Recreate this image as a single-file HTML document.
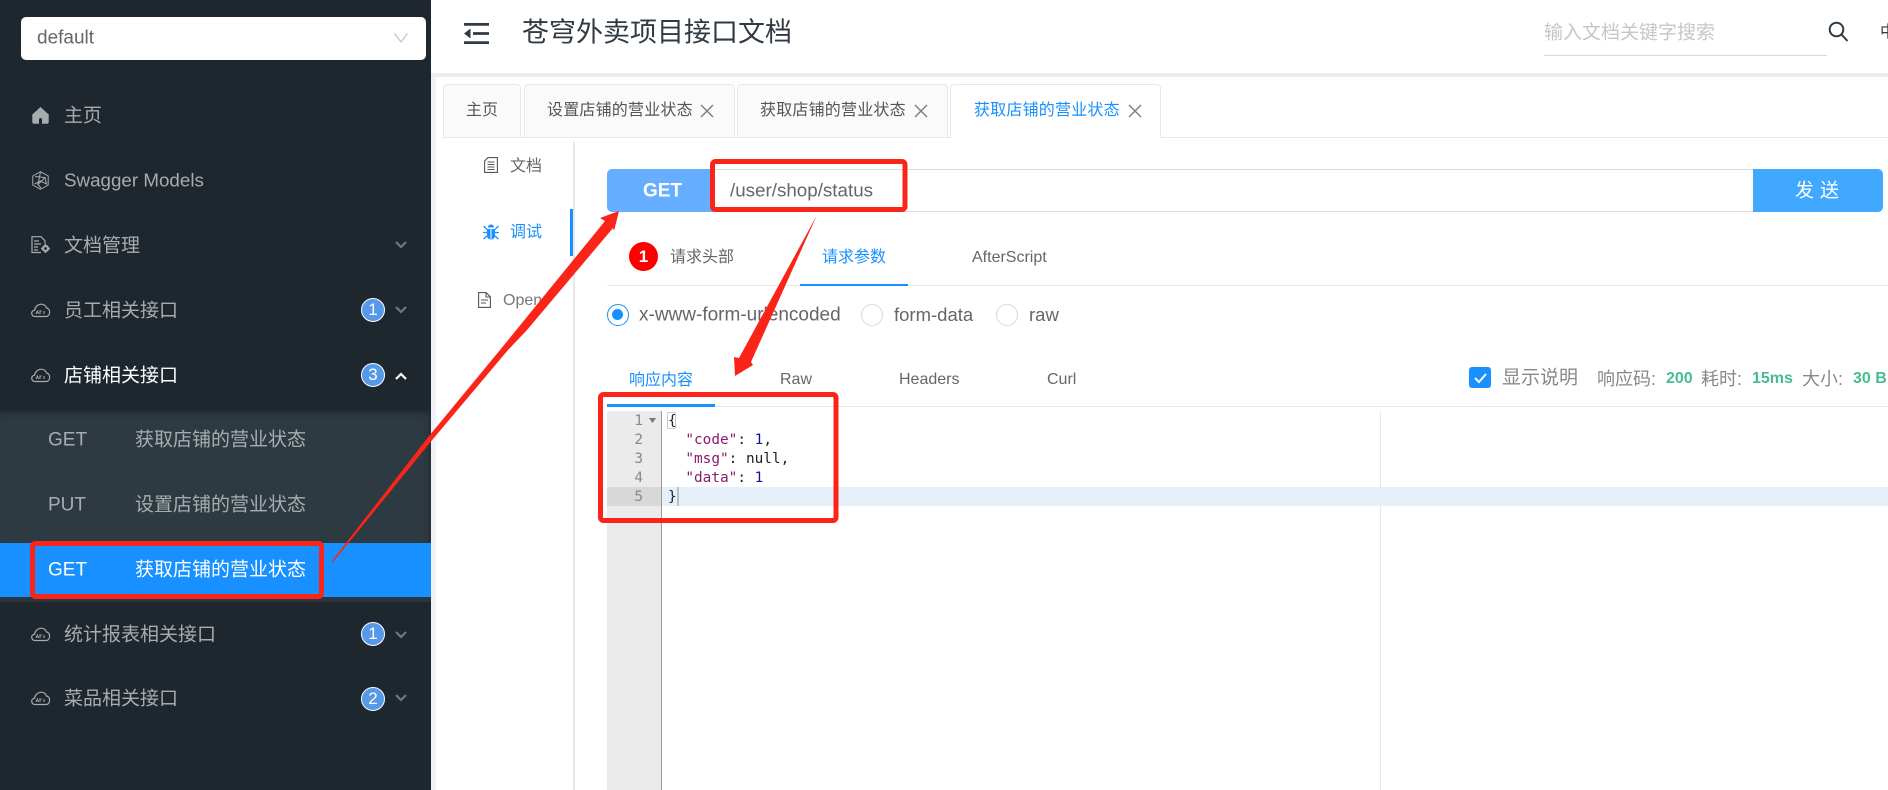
<!DOCTYPE html>
<html lang="zh-CN"><head><meta charset="utf-8"><title>苍穹外卖项目接口文档</title>
<style>
html,body{margin:0;padding:0;width:1888px;height:790px;overflow:hidden;background:#fff}
body{position:relative;font-family:"Liberation Sans","Noto Sans CJK SC",sans-serif;color:#666}
.a{position:absolute}
.t{position:absolute;white-space:nowrap;line-height:1;transform:translateY(calc(-50% + 1px))}
.s{font-size:19px;color:#a8acaf}
.tab{position:absolute;top:84px;height:52px;background:#fafafa;border:1px solid #e8e8e8;border-bottom:0;border-radius:4px 4px 0 0;box-sizing:content-box}
.b{position:absolute;width:22px;height:22px;border:1.500px solid #fff;border-radius:50%;background:#5599e8;color:#fff;font-size:17px;line-height:22px;text-align:center}
.m{font-family:"DejaVu Sans Mono","Liberation Mono",monospace;font-size:14.400px;position:absolute;white-space:pre;line-height:19px;color:#222}
.str{color:#8a1a6e}.num{color:#12129a}
.ln{position:absolute;left:607px;width:36px;text-align:right;font-family:"DejaVu Sans Mono","Liberation Mono",monospace;font-size:14.400px;line-height:19px;color:#888}
.r{position:absolute;width:20px;height:20px;border:1px solid #d9d9d9;border-radius:50%;background:#fff}
svg{position:absolute;overflow:visible}
</style></head><body>

<!-- sidebar -->
<div class="a" style="left:0;top:0;width:431px;height:790px;background:#1f272e"></div>
<div class="a" style="left:431px;top:73px;width:5px;height:717px;background:#f0f3f6"></div>
<div class="a" style="left:21px;top:17px;width:405px;height:43px;background:#fff;border-radius:5px"></div>
<div class="t" style="left:37px;top:37px;font-size:19px;color:#666">default</div>
<svg style="left:394px;top:33px" width="14" height="10"><path d="M.5 .5L7 9 13.500 .5" fill="none" stroke="#c4c4c4" stroke-width="1.200"/></svg>

<div class="a" style="left:0;top:410px;width:431px;height:133px;background:#2e3a42;box-shadow:inset 0 8px 8px -6px #1f272e,inset -8px 0 8px -8px #1f272e"></div>
<div class="a" style="left:0;top:597px;width:431px;height:5px;background:#2a353c"></div>
<div class="a" style="left:0;top:543px;width:431px;height:54px;background:#1890ff"></div>

<svg style="left:32px;top:107px" width="17" height="17" viewBox="0 0 17 17"><path fill="#a8acaf" d="M8.500 0L.3 7.500V15c0 1 .7 1.700 1.700 1.700h13c1 0 1.700-.7 1.700-1.700V7.500zM7 16.700v-4.200c0-.8.7-1.500 1.500-1.500s1.500 .7 1.500 1.500v4.200z"/></svg>
<svg style="left:32px;top:171px" width="17" height="19" viewBox="0 0 17 19" fill="none" stroke="#a8acaf" stroke-width="1"><path d="M8.500 .7L16.200 5v9l-7.700 4.300L.8 14V5z"/><path d="M3 5.500l10 1-7 7 3 3.500M8.500 1l-2.500 12M13 6.500l1.500 6.500-6-3-6 3"/></svg>
<svg style="left:31px;top:236px" width="20" height="18" viewBox="0 0 20 18" fill="none" stroke="#a8acaf" stroke-width="1.200"><path d="M10 16.500H1V.7h9l4 4v3M3 5h5M3 8h7M3 11h4M3 14h4"/><circle cx="14.500" cy="12.500" r="2.500" stroke-width="2.200"/><path d="M14.500 8v1.500M14.500 15.500V17M10 12.500h1.500M17.500 12.500H19" stroke-width="1.500"/></svg>

<div class="t s" style="left:64px;top:115px">主页</div>
<div class="t s" style="left:64px;top:180px;font-size:18.800px">Swagger Models</div>
<div class="t s" style="left:64px;top:245px">文档管理</div>
<div class="t s" style="left:64px;top:310px">员工相关接口</div>
<div class="t s" style="left:64px;top:375px;color:#fff">店铺相关接口</div>
<div class="t s" style="left:48px;top:439px">GET</div>
<div class="t s" style="left:135px;top:439px">获取店铺的营业状态</div>
<div class="t s" style="left:48px;top:504px">PUT</div>
<div class="t s" style="left:135px;top:504px">设置店铺的营业状态</div>
<div class="t s" style="left:48px;top:569px;color:#fff">GET</div>
<div class="t s" style="left:135px;top:569px;color:#fff">获取店铺的营业状态</div>
<div class="t s" style="left:64px;top:634px">统计报表相关接口</div>
<div class="t s" style="left:64px;top:698px">菜品相关接口</div>

<svg style="left:0;top:0" width="431" height="790">
<defs><g id="c" fill="none" stroke="#a8acaf" stroke-width="1.200"><path d="M5 13.500H4C2 13.500 .7 12 .7 10.300 .7 8.500 2 7.500 3.500 7.300 4 4 7 1 10.500 1.200 13 1.200 15 3 15.500 5 17.500 5.200 18.600 7 18.600 9.300 18.600 12 17 13.500 15 13.500z"/><path d="M5 11l1.500-3 1 3M9 11V8h1.500M13 8v3" stroke-width="1"/></g></defs>
<use href="#c" x="31" y="303"/><use href="#c" x="31" y="368"/><use href="#c" x="31" y="627"/><use href="#c" x="31" y="691"/>
<g fill="none" stroke="#70777c" stroke-width="2.200"><path d="M396 242l5 5 5-5M396 307l5 5 5-5M396 632l5 5 5-5M396 695l5 5 5-5"/></g>
<path d="M396 379l5-5 5 5" fill="none" stroke="#fff" stroke-width="2.200"/>
</svg>
<div class="b" style="left:361px;top:298px">1</div>
<div class="b" style="left:361px;top:363px">3</div>
<div class="b" style="left:361px;top:622px">1</div>
<div class="b" style="left:361px;top:687px">2</div>

<!-- header -->
<div class="a" style="left:431px;top:73px;width:1457px;height:4px;background:#e9edf0"></div>
<svg style="left:464px;top:23px" width="25" height="21" viewBox="0 0 25 21"><path fill="#303a44" d="M0 0h25v2.800H0zM0 18.200h25V21H0zM9 9.100h16v2.800H9zM6.500 5.500v10L0 10.500z"/></svg>
<div class="t" style="left:522px;top:32px;font-size:27px;color:#303a44">苍穹外卖项目接口文档</div>
<div class="t" style="left:1544px;top:32px;font-size:19px;color:#c6c6c6">输入文档关键字搜索</div>
<div class="a" style="left:1544px;top:55px;width:283px;height:1px;background:#d9d9d9"></div>
<svg style="left:1828px;top:21px" width="21" height="21" viewBox="0 0 21 21" fill="none" stroke="#2d3a46" stroke-width="2"><circle cx="8.500" cy="8.500" r="6.800"/><path d="M13.500 13.500l6 6.500"/></svg>
<div class="t" style="left:1880px;top:32px;font-size:16px;color:#303a44">中</div>

<!-- tabs -->
<div class="a" style="left:443px;top:137px;width:1445px;height:1px;background:#e8e8e8"></div>
<div class="tab" style="left:443px;width:76px"></div>
<div class="tab" style="left:524px;width:209px"></div>
<div class="tab" style="left:737px;width:209px"></div>
<div class="tab" style="left:950px;width:209px;height:53px;background:#fff"></div>
<div class="t" style="left:466px;top:110px;font-size:16px;color:#555">主页</div>
<div class="t" style="left:547px;top:110px;font-size:16px;letter-spacing:.2px;color:#555">设置店铺的营业状态</div>
<div class="t" style="left:760px;top:110px;font-size:16px;letter-spacing:.2px;color:#555">获取店铺的营业状态</div>
<div class="t" style="left:974px;top:110px;font-size:16px;letter-spacing:.2px;color:#1890ff">获取店铺的营业状态</div>
<svg style="left:0;top:0" width="1888" height="200"><g stroke="#808080" stroke-width="1.500" fill="none"><path d="M701 105l12 12M713 105l-12 12M915 105l12 12M927 105l-12 12M1129 105l12 12M1141 105l-12 12"/></g></svg>

<!-- vertical nav -->
<div class="a" style="left:573px;top:142px;width:2px;height:648px;background:#e8e8e8"></div>
<div class="a" style="left:570px;top:209px;width:3px;height:47px;background:#1890ff"></div>
<svg style="left:484px;top:157px" width="14" height="16" viewBox="0 0 14 16" fill="none" stroke="#555" stroke-width="1.100"><path d="M4 .6h9.400v14.800H.6V4zM3.500 5h7M3.500 7.500h7M3.500 10h7M3.500 12.500h7"/></svg>
<svg style="left:483px;top:224px" width="16" height="16" viewBox="0 0 16 16"><path fill="#1890ff" d="M5 3.500C5 1.500 6.500.5 8 .5s3 1 3 3zM4 5h8v7c0 2-2 3.500-4 3.500S4 14 4 12z"/><path stroke="#1890ff" stroke-width="1.300" d="M.5 2l3.500 3.500M15.500 2L12 5.500M0 8.500h4M16 8.500h-4M.5 15L4 12M15.500 15L12 12"/><path stroke="#fff" d="M8 5v10"/></svg>
<svg style="left:478px;top:292px" width="13" height="16" viewBox="0 0 13 16" fill="none" stroke="#555" stroke-width="1.100"><path d="M.6.6h7.500l4.300 4.300v10.500H.6zM8 .6v4.400h4.400M3 8h7M3 11h5"/></svg>
<div class="t" style="left:510px;top:166px;font-size:16px;color:#666">文档</div>
<div class="t" style="left:510px;top:232px;font-size:16px;color:#1890ff">调试</div>
<div class="t" style="left:503px;top:300px;font-size:16px;color:#777">Open</div>

<!-- url row -->
<div class="a" style="left:715px;top:169px;width:1040px;height:41px;border:1px solid #d9d9d9;border-width:1px 0"></div>
<div class="a" style="left:607px;top:169px;width:108px;height:43px;background:#66aeff;border-radius:5px 0 0 5px"></div>
<div class="t" style="left:643px;top:190px;font-size:19px;font-weight:bold;color:#fff">GET</div>
<div class="t" style="left:730px;top:190px;font-size:18.800px;color:#666">/user/shop/status</div>
<div class="a" style="left:1753px;top:169px;width:130px;height:43px;background:#40a9ff;border-radius:0 5px 5px 0"></div>
<div class="t" style="left:1795px;top:190px;font-size:19px;letter-spacing:6px;color:#fff">发送</div>

<!-- request tabs -->
<div class="a" style="left:607px;top:285px;width:1281px;height:1px;background:#e8e8e8"></div>
<div class="a" style="left:800px;top:284px;width:108px;height:2px;background:#1890ff"></div>
<div class="a" style="left:629px;top:242px;width:29px;height:29px;border-radius:50%;background:#f00;color:#fff;font-size:17px;font-weight:bold;line-height:29px;text-align:center">1</div>
<div class="t" style="left:670px;top:257px;font-size:16px;color:#666">请求头部</div>
<div class="t" style="left:822px;top:257px;font-size:16px;color:#1890ff">请求参数</div>
<div class="t" style="left:972px;top:257px;font-size:16px;color:#666">AfterScript</div>

<!-- radios -->
<div class="r" style="left:607px;top:304px;border-color:#1890ff"></div>
<div class="a" style="left:612px;top:309px;width:11px;height:11px;border-radius:50%;background:#1890ff"></div>
<div class="t" style="left:639px;top:314px;font-size:19px;color:#666">x-www-form-urlencoded</div>
<div class="r" style="left:861px;top:304px"></div>
<div class="t" style="left:894px;top:314px;font-size:18.500px;color:#666">form-data</div>
<div class="r" style="left:996px;top:304px"></div>
<div class="t" style="left:1029px;top:314px;font-size:18.500px;color:#666">raw</div>

<!-- response tabs -->
<div class="a" style="left:607px;top:406px;width:1281px;height:1px;background:#e8e8e8"></div>
<div class="a" style="left:607px;top:404px;width:108px;height:3px;background:#1890ff"></div>
<div class="t" style="left:629px;top:380px;font-size:16px;color:#1890ff">响应内容</div>
<div class="t" style="left:780px;top:379px;font-size:16px;color:#666">Raw</div>
<div class="t" style="left:899px;top:379px;font-size:16px;color:#666">Headers</div>
<div class="t" style="left:1047px;top:379px;font-size:16px;color:#666">Curl</div>

<div class="a" style="left:1469px;top:367px;width:22px;height:21px;background:#1890ff;border-radius:3px"></div>
<svg style="left:1469px;top:367px" width="22" height="21"><path d="M6 11l4 4 7-8" fill="none" stroke="#fff" stroke-width="2"/></svg>
<div class="t" style="left:1502px;top:377px;font-size:19px;color:#888">显示说明</div>
<div class="t" style="left:1597px;top:378px;font-size:18px;color:#888">响应码:</div>
<div class="t" style="left:1666px;top:378px;font-size:16px;font-weight:bold;color:#47bd8f">200</div>
<div class="t" style="left:1701px;top:378px;font-size:18px;color:#888">耗时:</div>
<div class="t" style="left:1752px;top:378px;font-size:16px;font-weight:bold;color:#47bd8f">15ms</div>
<div class="t" style="left:1802px;top:378px;font-size:18px;color:#888">大小:</div>
<div class="t" style="left:1853px;top:378px;font-size:16px;font-weight:bold;color:#47bd8f">30 B</div>

<!-- editor -->
<div class="a" style="left:1380px;top:411px;width:1px;height:379px;background:#e8e8e8"></div>
<div class="a" style="left:607px;top:411px;width:54px;height:379px;background:#ebebeb"></div>
<div class="a" style="left:661px;top:411px;width:1px;height:379px;background:#9a9a9a"></div>
<div class="a" style="left:607px;top:487px;width:54px;height:19px;background:#d8d8d8"></div>
<div class="a" style="left:662px;top:487px;width:1226px;height:19px;background:#e6f0fb"></div>
<div class="ln" style="top:412px">1</div><div class="ln" style="top:431px">2</div><div class="ln" style="top:450px">3</div><div class="ln" style="top:469px">4</div><div class="ln" style="top:488px">5</div>
<svg style="left:649px;top:418px" width="7" height="5"><path d="M0 0h7L3.500 5z" fill="#777"/></svg>
<div class="a" style="left:667px;top:412px;width:9px;height:17px;border:1px solid #c8c8c8;box-sizing:border-box;border-radius:2px"></div>
<div class="a" style="left:677px;top:487px;width:2px;height:19px;background:#b8c2cc"></div>
<div class="m" style="left:668px;top:412px">{</div>
<div class="m" style="left:668px;top:431px">  <span class="str">"code"</span>: <span class="num">1</span>,</div>
<div class="m" style="left:668px;top:450px">  <span class="str">"msg"</span>: null,</div>
<div class="m" style="left:668px;top:469px">  <span class="str">"data"</span>: <span class="num">1</span></div>
<div class="m" style="left:668px;top:488px">}</div>

<!-- annotations -->
<svg style="left:0;top:0" width="1888" height="790">
<g fill="none" stroke="#fb2418" stroke-width="5">
<rect x="32.500" y="543.500" width="289" height="53" rx="3"/>
<rect x="712.500" y="161.500" width="192.500" height="48" rx="3"/>
<rect x="600.500" y="394.500" width="235.500" height="126" rx="3"/>
</g>
<g fill="#fb2418">
<path d="M332 561L429 436 500 350 605 221 600 218 619 211 614 231 613 228 527 330 508 350 433 439 333 562z"/>
<path d="M817 215L751 362 753 365 735 376 734 357 739 358z"/>
</g>
</svg>
</body></html>
